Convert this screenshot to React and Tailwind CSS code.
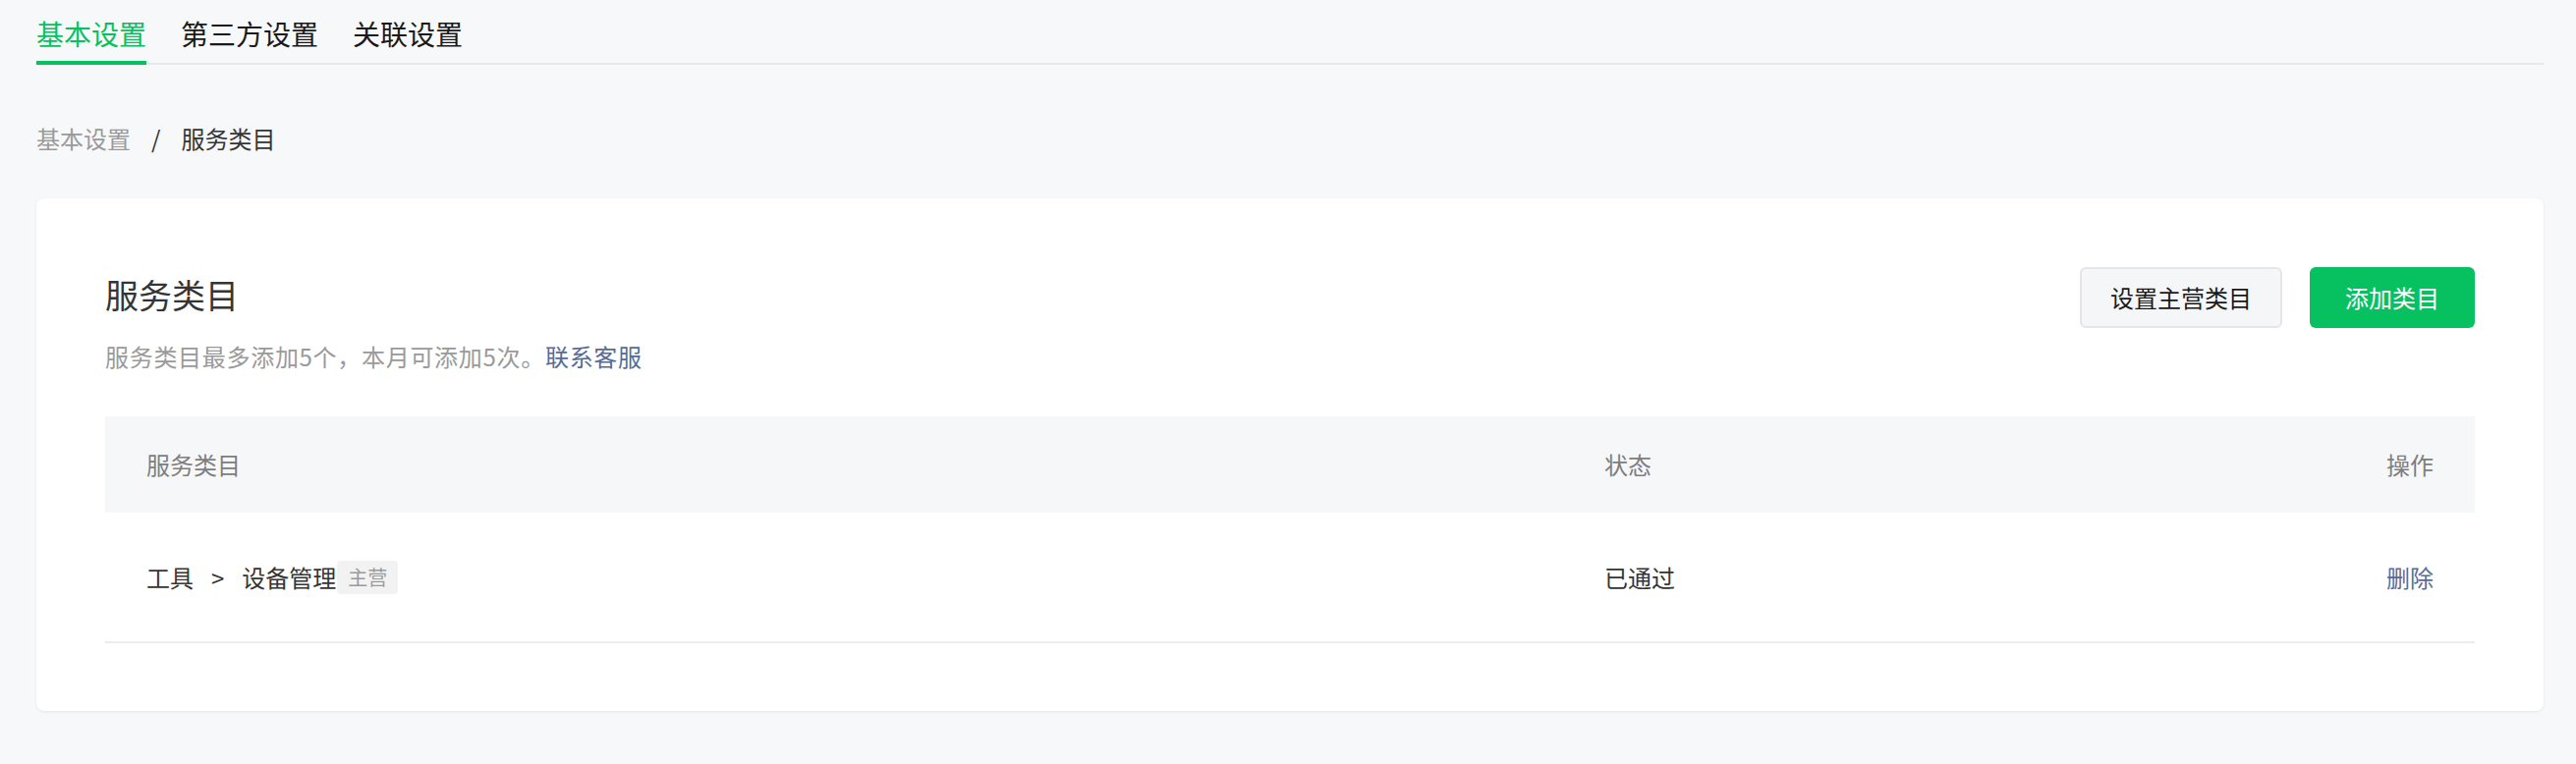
import { useState } from 'react';

const tabs = ['基本设置', '第三方设置', '关联设置'];

const Tabs = ({ active, onChange }) => (
  <div className="flex gap-[35px] border-b-2 border-[#e7e8eb] pt-[14px]">
    {tabs.map((t, i) => (
      <button
        key={t}
        onClick={() => onChange(i)}
        className={
          i === active
            ? 'text-[28px] leading-[40px] pb-[8px] border-b-4 border-[#07c160] -mb-[2px] text-[#07c160]'
            : 'text-[28px] leading-[40px] pb-[8px] border-b-4 border-transparent -mb-[2px] text-[#1a1a1a]'
        }
      >
        {t}
      </button>
    ))}
  </div>
);

const Breadcrumb = () => (
  <div className="flex items-center gap-[21px] mt-[58px] text-[24px] leading-[34px]">
    <span className="text-[#9a9a9a]">基本设置</span>
    <span className="text-[#353535]">/</span>
    <span className="text-[#353535]">服务类目</span>
  </div>
);

export default function App() {
  const [tab, setTab] = useState(0);
  const rows = [{ path: ['工具', '设备管理'], main: true, status: '已通过' }];

  return (
    <div className="min-h-[778px] bg-[#f7f8fa] pl-[37px] pr-[33px] font-['Noto_Sans_CJK_SC','Noto_Sans',sans-serif]">
      <Tabs active={tab} onChange={setTab} />
      <Breadcrumb />

      <div className="mt-[44px] bg-white rounded-[8px] shadow-[0_1px_3px_rgba(0,0,0,0.08)] px-[70px] pt-[70px] pb-[69px]">
        <div className="flex justify-between items-start">
          <div>
            <h2 className="text-[34px] leading-[56px] text-[#353535]">服务类目</h2>
            <p className="mt-[18px] text-[24px] leading-[34px] text-[#9a9a9a] tracking-[0.7px]">
              服务类目最多添加5个，本月可添加5次。
              <a className="text-[#576b95] cursor-pointer">联系客服</a>
            </p>
          </div>
          <div className="flex gap-[28px]">
            <button className="h-[62px] px-[29px] rounded-[6px] border-2 border-[#e4e6e9] bg-[#f5f6f7] text-[24px] text-[#1a1a1a]">
              设置主营类目
            </button>
            <button className="h-[62px] px-[36px] rounded-[6px] bg-[#07c160] text-[24px] text-white">
              添加类目
            </button>
          </div>
        </div>

        <div className="mt-[44px] text-[24px]">
          <div className="flex items-center h-[98px] px-[42px] bg-[#f6f7f9] text-[#7e7e7e]">
            <div className="flex-1">服务类目</div>
            <div className="w-[600px]">状态</div>
            <div className="w-[244px] text-right">操作</div>
          </div>
          {rows.map((r, i) => (
            <div key={i} className="flex items-center h-[133px] px-[42px] border-b-2 border-[#ececec] text-[#353535]">
              <div className="flex-1 flex items-center">
                <span>{r.path[0]}</span>
                <span className="mx-[18px]">&gt;</span>
                <span>{r.path[1]}</span>
                {r.main && (
                  <span className="ml-[1px] px-[11px] h-[34px] flex items-center rounded-[4px] bg-[#f2f2f2] text-[20px] text-[#9a9a9a]">
                    主营
                  </span>
                )}
              </div>
              <div className="w-[600px]">{r.status}</div>
              <div className="w-[244px] text-right">
                <a className="text-[#576b95] cursor-pointer">删除</a>
              </div>
            </div>
          ))}
        </div>
      </div>
    </div>
  );
}
